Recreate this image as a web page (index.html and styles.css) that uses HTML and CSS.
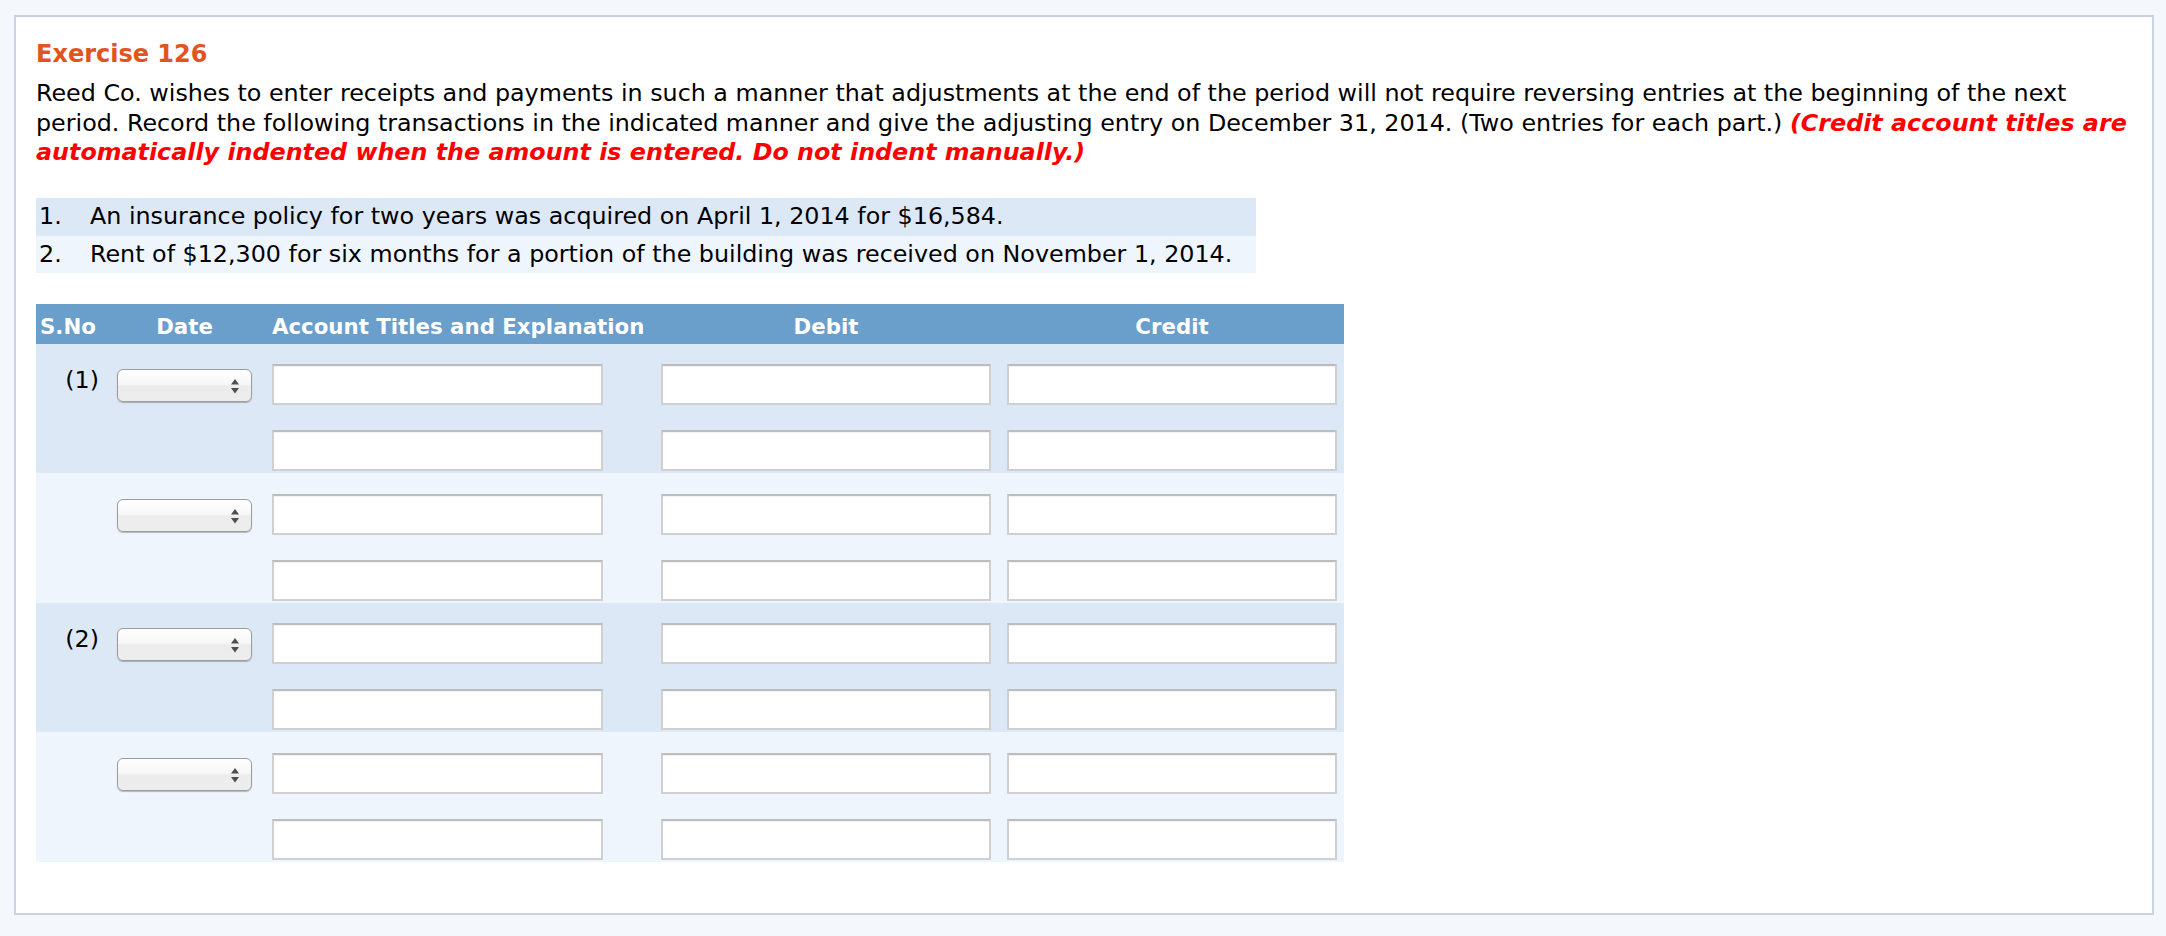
FILE: index.html
```html
<!DOCTYPE html>
<html lang="en">
<head>
<meta charset="utf-8">
<title>Exercise 126</title>
<link rel="stylesheet" href="styles.css">
</head>
<body>
<div class="panel">
  <h1 class="title">Exercise 126</h1>
  <p class="intro">Reed Co. wishes to enter receipts and payments in such a manner that adjustments at the end of the period will not require reversing entries at the beginning of the next period. Record the following transactions in the indicated manner and give the adjusting entry on December 31, 2014. (Two entries for each part.) <em class="note">(Credit account titles are automatically indented when the amount is entered. Do not indent manually.)</em></p>

  <ol class="items">
    <li class="item item-dark"><span class="num">1.</span><span class="text">An insurance policy for two years was acquired on April 1, 2014 for $16,584.</span></li>
    <li class="item item-light"><span class="num">2.</span><span class="text">Rent of $12,300 for six months for a portion of the building was received on November 1, 2014.</span></li>
  </ol>

  <div class="journal">
    <div class="jhead">
      <span class="h-sno">S.No</span>
      <span class="h-date">Date</span>
      <span class="h-acct">Account Titles and Explanation</span>
      <span class="h-debit">Debit</span>
      <span class="h-credit">Credit</span>
    </div>

    <div class="group group-dark">
      <div class="jrow">
        <span class="sno">(1)</span>
        <span class="selwrap"><select class="datesel"><option></option></select><svg class="arrows" width="8" height="15" viewBox="0 0 8 15"><polygon points="4,0 8,5.5 0,5.5"/><polygon points="0,9 8,9 4,14.5"/></svg></span>
        <input class="field acct" type="text">
        <input class="field debit" type="text">
        <input class="field credit" type="text">
      </div>
      <div class="jrow">
        <span class="sno"></span>
        <span class="selspace"></span>
        <input class="field acct" type="text">
        <input class="field debit" type="text">
        <input class="field credit" type="text">
      </div>
    </div>

    <div class="group group-light">
      <div class="jrow">
        <span class="sno"></span>
        <span class="selwrap"><select class="datesel"><option></option></select><svg class="arrows" width="8" height="15" viewBox="0 0 8 15"><polygon points="4,0 8,5.5 0,5.5"/><polygon points="0,9 8,9 4,14.5"/></svg></span>
        <input class="field acct" type="text">
        <input class="field debit" type="text">
        <input class="field credit" type="text">
      </div>
      <div class="jrow">
        <span class="sno"></span>
        <span class="selspace"></span>
        <input class="field acct" type="text">
        <input class="field debit" type="text">
        <input class="field credit" type="text">
      </div>
    </div>

    <div class="group group-dark">
      <div class="jrow">
        <span class="sno">(2)</span>
        <span class="selwrap"><select class="datesel"><option></option></select><svg class="arrows" width="8" height="15" viewBox="0 0 8 15"><polygon points="4,0 8,5.5 0,5.5"/><polygon points="0,9 8,9 4,14.5"/></svg></span>
        <input class="field acct" type="text">
        <input class="field debit" type="text">
        <input class="field credit" type="text">
      </div>
      <div class="jrow">
        <span class="sno"></span>
        <span class="selspace"></span>
        <input class="field acct" type="text">
        <input class="field debit" type="text">
        <input class="field credit" type="text">
      </div>
    </div>

    <div class="group group-light">
      <div class="jrow">
        <span class="sno"></span>
        <span class="selwrap"><select class="datesel"><option></option></select><svg class="arrows" width="8" height="15" viewBox="0 0 8 15"><polygon points="4,0 8,5.5 0,5.5"/><polygon points="0,9 8,9 4,14.5"/></svg></span>
        <input class="field acct" type="text">
        <input class="field debit" type="text">
        <input class="field credit" type="text">
      </div>
      <div class="jrow">
        <span class="sno"></span>
        <span class="selspace"></span>
        <input class="field acct" type="text">
        <input class="field debit" type="text">
        <input class="field credit" type="text">
      </div>
    </div>
  </div>
</div>
</body>
</html>
```

FILE: styles.css
```css
* {
  box-sizing: border-box;
}

html, body {
  margin: 0;
  padding: 0;
  background: #f4f8fc;
}

body {
  font-family: "DejaVu Sans", Verdana, sans-serif;
  color: #000;
}

.panel {
  margin: 15px 12px 0 14px;
  height: 900px;
  background: #fff;
  border: 2px solid #c9d3df;
  padding: 22px 18px 0 20px;
}

.title {
  margin: 0 0 10px 0;
  font-size: 24px;
  line-height: 30px;
  font-weight: bold;
  color: #e1541f;
}

.intro {
  margin: 0;
  font-size: 23.8px;
  line-height: 29.7px;
}

.note {
  color: #ff0000;
  font-weight: bold;
  font-style: italic;
}

.items {
  list-style: none;
  margin: 30px 0 0 0;
  padding: 0;
  width: 1220px;
}

.item {
  display: flex;
  height: 37.5px;
  font-size: 23.8px;
  line-height: 37.5px;
  white-space: nowrap;
}

.item-dark {
  background: #dde8f7;
}

.item-light {
  background: #eef5fd;
}

.num {
  width: 54px;
  padding-left: 3px;
  flex: none;
}

.journal {
  margin-top: 31px;
  width: 1308px;
}

.jhead {
  display: flex;
  height: 40px;
  padding-top: 5px;
  background: #6a9ecb;
  color: #fff;
  font-size: 21.3px;
  font-weight: bold;
  line-height: 35px;
  white-space: nowrap;
}

.h-sno {
  width: 63px;
  padding-left: 4px;
}

.h-date {
  width: 135px;
  margin-left: 18px;
  text-align: center;
}

.h-acct {
  width: 331px;
  margin-left: 20px;
}

.h-debit {
  width: 330px;
  margin-left: 58px;
  text-align: center;
}

.h-credit {
  width: 330px;
  margin-left: 16px;
  text-align: center;
}

.group {
  display: flex;
  flex-direction: column;
  gap: 25px;
  padding-bottom: 2px;
}

.group-dark {
  background: #dde8f7;
  padding-top: 20px;
}

.group-light {
  background: #eef5fd;
  padding-top: 21px;
}

.jrow {
  display: flex;
  align-items: flex-start;
  height: 41px;
}

.sno {
  width: 63px;
  flex: none;
  text-align: right;
  font-size: 23.8px;
  line-height: 33px;
}

.selwrap {
  position: relative;
  display: block;
  flex: none;
  width: 135px;
  height: 33px;
  margin: 5px 0 0 18px;
}

.selspace {
  display: block;
  flex: none;
  width: 135px;
  margin-left: 18px;
}

.datesel {
  -webkit-appearance: none;
  appearance: none;
  display: block;
  width: 135px;
  height: 33px;
  margin: 0;
  padding: 0;
  border: 1px solid #9c9c9c;
  border-radius: 6px;
  background: linear-gradient(to bottom, #ffffff 0%, #f7f7f7 45%, #ececec 52%, #ededed 100%);
  box-shadow: 0 1px 1px rgba(0, 0, 0, 0.25);
  font-size: 16px;
  color: #000;
}

.arrows {
  position: absolute;
  right: 13px;
  top: 10px;
  fill: #4e4e4e;
  pointer-events: none;
}

.field {
  flex: none;
  display: block;
  height: 41px;
  margin: 0;
  padding: 0 6px;
  background: #fff;
  border: 2px solid #d0d0d0;
  border-top-color: #bdbdbd;
  box-shadow: inset 0 1px 1px rgba(0, 0, 0, 0.06);
  font-family: "DejaVu Sans", Verdana, sans-serif;
  font-size: 20px;
  outline: none;
}

.acct {
  width: 331px;
  margin-left: 20px;
}

.debit {
  width: 330px;
  margin-left: 58px;
}

.credit {
  width: 330px;
  margin-left: 16px;
}
```
